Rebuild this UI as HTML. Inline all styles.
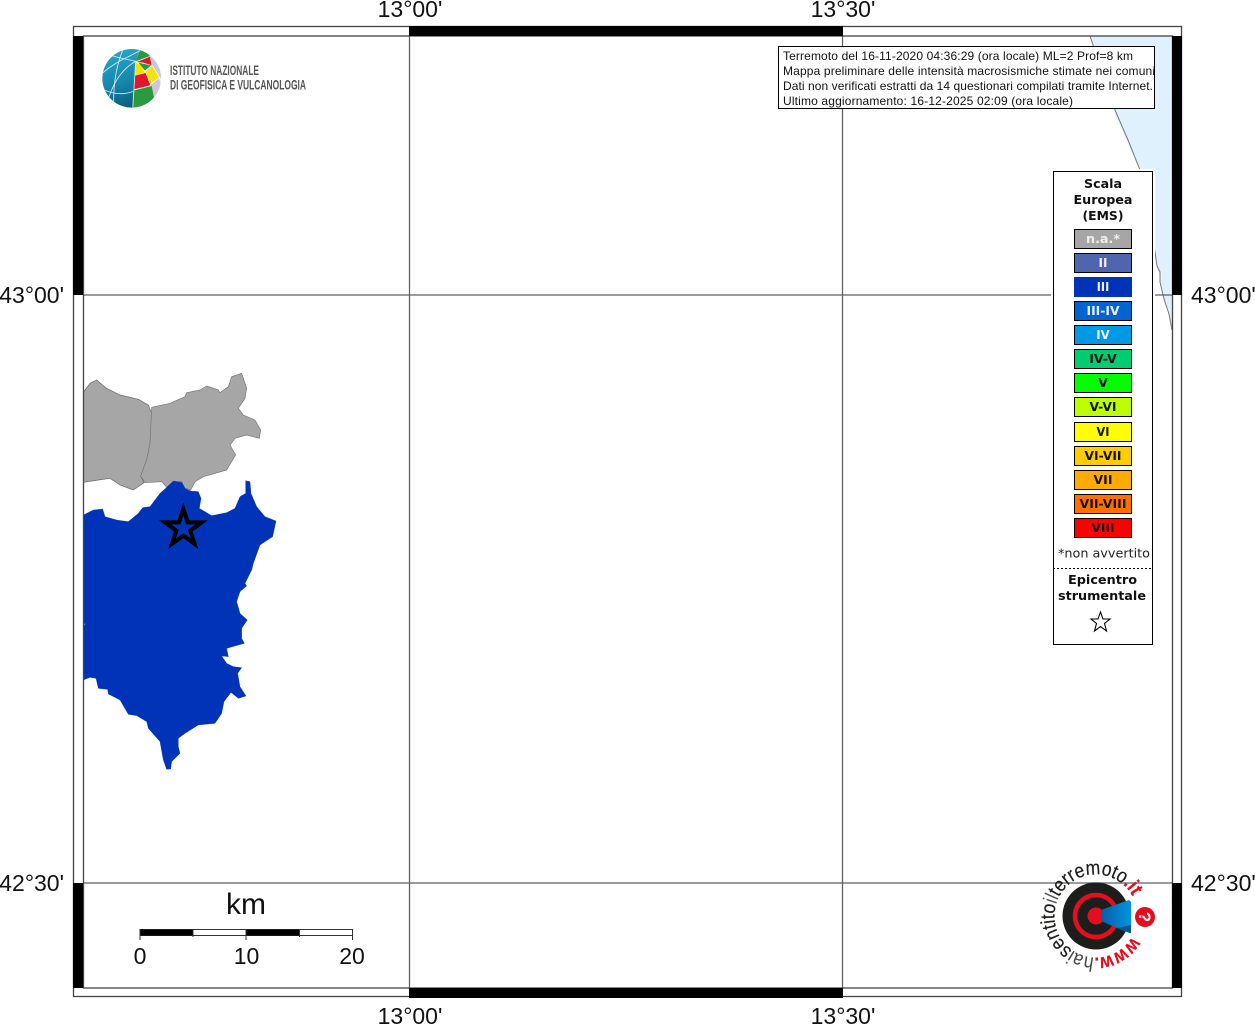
<!DOCTYPE html>
<html lang="it">
<head>
<meta charset="utf-8">
<title>Mappa intensità macrosismiche</title>
<style>
html,body{margin:0;padding:0;background:#fff;overflow:hidden}
svg{display:block}
.t{font-family:"Liberation Sans",sans-serif;fill:#111}
.d{font-family:"DejaVu Sans",sans-serif}
.b{font-family:"DejaVu Sans",sans-serif;font-weight:bold;font-size:12px;text-anchor:middle}
</style>
</head>
<body>
<svg width="1255" height="1024" viewBox="0 0 1255 1024" xmlns="http://www.w3.org/2000/svg">
<defs>
<linearGradient id="gl" x1="0.3" y1="0" x2="0.6" y2="1"><stop offset="0" stop-color="#27a5c8"/><stop offset=".55" stop-color="#1585ab"/><stop offset="1" stop-color="#0a5876"/></linearGradient>
<linearGradient id="horn" x1="0" y1="0" x2="1" y2="0"><stop offset="0" stop-color="#0a5cad"/><stop offset="1" stop-color="#0096dc"/></linearGradient>
<clipPath id="gc"><circle cx="110" cy="109" r="88"/></clipPath>
<path id="arc" d="M1131.9,936.75 A41.5,41.5 0 1 1 1133.6,898.5"/>
</defs>

<!-- water -->
<polygon points="1090,36 1172,36 1172,330 1170,318 1165,302 1162,290 1160,278 1157,266 1155,252 1140,170 1115,115" fill="#dff1fd"/>
<polyline points="1090,36 1115,110 1128,140 1140,170 1155,252 1157,266 1160,272 1160,282 1163,295 1165,302 1169,314 1172,330" fill="none" stroke="#777" stroke-width="1"/>

<!-- grid -->
<g stroke="#5f5f5f" stroke-width="1.25" fill="none">
<line x1="409.5" y1="36" x2="409.5" y2="988"/>
<line x1="842.5" y1="36" x2="842.5" y2="988"/>
<line x1="83" y1="295" x2="1172" y2="295"/>
<line x1="83" y1="883" x2="1172" y2="883"/>
</g>

<!-- regions -->
<g transform="translate(70,360) scale(.33333)" stroke-linejoin="round">
<polygon fill="#a6a6a6" stroke="#666" stroke-width="2" points="40,97 60,70 80,60 110,85 150,105 205,118 235,135 245,160 240,250 230,300 212,348 222,368 190,390 150,375 120,355 85,360 40,367"/>
<polygon fill="#a6a6a6" stroke="#777" stroke-width="2" points="245,142 300,130 345,110 350,98 390,90 410,78 445,90 450,98 475,80 485,50 515,40 530,85 525,115 505,145 520,165 555,180 572,210 568,235 530,225 495,235 480,255 497,285 470,330 400,350 375,365 362,390 345,385 335,365 310,365 290,382 275,365 225,368 212,348 230,300 240,250"/>
<polygon fill="#0033b8" stroke="#0033b8" stroke-width="1" points="40,465 70,450 98,447 105,470 140,480 175,485 205,460 218,443 240,440 270,400 290,382 310,363 335,367 345,385 362,393 385,395 393,415 388,445 425,467 470,458 495,445 510,410 527,400 527,362 540,365 543,400 560,440 585,470 618,483 608,530 570,555 550,610 545,630 525,670 530,678 510,695 500,725 510,760 532,780 515,805 515,835 523,850 470,865 475,890 455,888 470,910 490,920 515,923 503,940 510,980 528,1008 505,1015 483,997 462,1025 455,1060 435,1090 385,1095 345,1120 325,1135 325,1160 330,1180 305,1205 302,1227 290,1228 280,1200 270,1145 235,1105 230,1085 200,1067 175,1063 150,1020 115,1002 113,988 85,985 78,955 60,952 40,960 40,795 48,792 40,790"/>
<polygon fill="#0033b8" stroke="#000" stroke-width="12" stroke-linejoin="miter" stroke-miterlimit="6" points="340,447 353,487 395,487 361,512 374,552 340,527 306,552 319,512 285,487 327,487"/>
</g>

<!-- frame -->
<rect x="73.5" y="26.5" width="1108" height="970" fill="none" stroke="#444" stroke-width="1.3"/>
<rect x="83.5" y="36" width="1089" height="952" fill="none" stroke="#444" stroke-width="1.3"/>
<g fill="#000">
<rect x="409" y="26" width="434" height="10"/>
<rect x="409" y="988" width="434" height="10"/>
<rect x="73" y="36" width="10" height="259"/>
<rect x="73" y="883" width="10" height="105"/>
<rect x="1172" y="36" width="10" height="259"/>
<rect x="1172" y="883" width="10" height="105"/>
</g>

<!-- tick labels -->
<g class="t" font-size="23">
<text x="410" y="17" text-anchor="middle">13°00'</text>
<text x="843" y="17" text-anchor="middle">13°30'</text>
<text x="410" y="1024" text-anchor="middle">13°00'</text>
<text x="843" y="1024" text-anchor="middle">13°30'</text>
<text x="64" y="303" text-anchor="end">43°00'</text>
<text x="64" y="891" text-anchor="end">42°30'</text>
<text x="1191" y="303">43°00'</text>
<text x="1191" y="891">42°30'</text>
</g>

<!-- INGV logo -->
<g transform="translate(95,42) scale(.33333)">
<circle cx="110" cy="109" r="88" fill="url(#gl)"/>
<g clip-path="url(#gc)">
<polygon points="200,20 200,200 112,205 122,58 135,20" fill="#fff"/>
<polygon points="122,58 135,22 150,26 165,42" fill="#2a9a3c"/>
<polygon points="125,60 165,44 170,70 145,62" fill="#e2152f"/>
<polygon points="165,40 200,75 200,115 172,68" fill="#cfc6d8"/>
<polygon points="122,60 140,72 150,92 121,100" fill="#f4e20c"/>
<polygon points="130,62 168,70 150,86" fill="#2a9a3c"/>
<polygon points="152,88 172,72 192,106 166,126" fill="#f4e20c"/>
<polygon points="120,101 152,93 166,130 116,142" fill="#e2152f"/>
<polygon points="168,128 193,108 200,150 178,165" fill="#cfc6d8"/>
<polygon points="114,146 170,132 178,170 140,200 112,205" fill="#2a9a3c"/>
<polygon points="176,168 193,150 178,182" fill="#e2152f"/>
<g fill="none" stroke="#d8eef5" stroke-width="2.5">
<path d="M85,20 C68,60 54,120 56,195"/>
<path d="M122,58 L113,205"/>
<path d="M122,58 C90,75 60,110 42,165"/>
<path d="M42,38 C75,50 100,52 122,58"/>
<path d="M24,92 C60,60 95,48 135,26"/>
<path d="M30,145 C55,155 85,160 114,148"/>
</g>
</g>
</g>
<g font-family="'Liberation Sans',sans-serif" font-weight="bold" fill="#555" font-size="14">
<text x="170" y="75" textLength="89" lengthAdjust="spacingAndGlyphs">ISTITUTO NAZIONALE</text>
<text x="170" y="89.5" textLength="136" lengthAdjust="spacingAndGlyphs">DI GEOFISICA E VULCANOLOGIA</text>
</g>

<!-- info box -->
<rect x="778.5" y="46.5" width="376" height="62" fill="#fff"/>
<g class="t" font-size="12">
<text x="783" y="60" textLength="350" lengthAdjust="spacing">Terremoto del 16-11-2020 04:36:29 (ora locale) ML=2 Prof=8 km</text>
<text x="783" y="75" textLength="372" lengthAdjust="spacing">Mappa preliminare delle intensità macrosismiche stimate nei comuni</text>
<text x="783" y="90" textLength="370" lengthAdjust="spacing">Dati non verificati estratti da 14 questionari compilati tramite Internet.</text>
<text x="783" y="105" textLength="290" lengthAdjust="spacing">Ultimo aggiornamento: 16-12-2025 02:09 (ora locale)</text>
</g>
<rect x="778.5" y="46.5" width="376" height="62" fill="none" stroke="#000" stroke-width="1"/>

<!-- legend -->
<rect x="1051" y="169" width="104" height="478" fill="#fff"/>
<rect x="1053.5" y="171.5" width="99" height="473" fill="#fff" stroke="#000" stroke-width="1"/>
<g class="b" fill="#111">
<text x="1103" y="188" textLength="38" lengthAdjust="spacingAndGlyphs">Scala</text>
<text x="1103" y="204" textLength="59" lengthAdjust="spacingAndGlyphs">Europea</text>
<text x="1103" y="220" textLength="41" lengthAdjust="spacingAndGlyphs">(EMS)</text>
</g>
<g stroke="#000" stroke-width="1">
<rect x="1074.5" y="229.5" width="57" height="19" fill="#a6a6a6"/>
<rect x="1074.5" y="253.5" width="57" height="19" fill="#5065b0"/>
<rect x="1074.5" y="277.5" width="57" height="19" fill="#0033b8" stroke="#0033b8"/>
<rect x="1074.5" y="301.5" width="57" height="19" fill="#0064d2"/>
<rect x="1074.5" y="325.5" width="57" height="19" fill="#0099e6"/>
<rect x="1074.5" y="349.5" width="57" height="19" fill="#00cc70"/>
<rect x="1074.5" y="373.5" width="57" height="19" fill="#00ff00"/>
<rect x="1074.5" y="397.5" width="57" height="19" fill="#bbff00"/>
<rect x="1074.5" y="422.5" width="57" height="19" fill="#ffff00"/>
<rect x="1074.5" y="446.5" width="57" height="19" fill="#ffcc00"/>
<rect x="1074.5" y="470.5" width="57" height="19" fill="#ffaa00"/>
<rect x="1074.5" y="494.5" width="57" height="19" fill="#ff7000"/>
<rect x="1074.5" y="518.5" width="57" height="19" fill="#ff0000"/>
</g>
<g class="b" fill="#eee">
<text x="1103" y="243" textLength="34" lengthAdjust="spacingAndGlyphs">n.a.*</text>
<text x="1103" y="267" textLength="9" lengthAdjust="spacingAndGlyphs">II</text>
<text x="1103" y="291" textLength="12.5" lengthAdjust="spacingAndGlyphs">III</text>
<text x="1103" y="315" textLength="33" lengthAdjust="spacingAndGlyphs">III-IV</text>
<text x="1103" y="339" textLength="13.5" lengthAdjust="spacingAndGlyphs">IV</text>
</g>
<g class="b" fill="#111">
<text x="1103" y="363" textLength="27.5" lengthAdjust="spacingAndGlyphs">IV-V</text>
<text x="1103" y="387" textLength="9.5" lengthAdjust="spacingAndGlyphs">V</text>
<text x="1103" y="411" textLength="27" lengthAdjust="spacingAndGlyphs">V-VI</text>
<text x="1103" y="436" textLength="13" lengthAdjust="spacingAndGlyphs">VI</text>
<text x="1103" y="460" textLength="37" lengthAdjust="spacingAndGlyphs">VI-VII</text>
<text x="1103" y="484" textLength="19" lengthAdjust="spacingAndGlyphs">VII</text>
<text x="1103" y="508" textLength="47" lengthAdjust="spacingAndGlyphs">VII-VIII</text>
<text x="1103" y="532" textLength="23" lengthAdjust="spacingAndGlyphs">VIII</text>
</g>
<text class="d" x="1058" y="557.5" font-size="12" fill="#222" textLength="92" lengthAdjust="spacingAndGlyphs">*non avvertito</text>
<line x1="1053" y1="568.5" x2="1151" y2="568.5" stroke="#000" stroke-width="1" stroke-dasharray="2 2"/>
<g class="b" fill="#111">
<text x="1102.5" y="584" textLength="69" lengthAdjust="spacingAndGlyphs">Epicentro</text>
<text x="1102" y="600" textLength="88" lengthAdjust="spacingAndGlyphs">strumentale</text>
</g>
<polygon points="1100.5,612 1103,619 1110,619 1104.5,623.5 1106.5,631 1100.5,626.5 1094.5,631 1096.5,623.5 1091,619 1098,619" fill="#fff" stroke="#000" stroke-width="1.1"/>

<!-- scale bar -->
<g>
<rect x="140" y="929.5" width="212.5" height="6" fill="#fff" stroke="#333" stroke-width="1"/>
<rect x="140" y="929.5" width="53" height="6" fill="#000"/>
<rect x="246" y="929.5" width="53.5" height="6" fill="#000"/>
<g stroke="#333" stroke-width="1">
<line x1="140" y1="929" x2="140" y2="940"/>
<line x1="246" y1="929" x2="246" y2="940"/>
<line x1="352.5" y1="929" x2="352.5" y2="940"/>
<line x1="193" y1="929" x2="193" y2="937"/>
<line x1="299.5" y1="929" x2="299.5" y2="937"/>
</g>
</g>
<g class="t" text-anchor="middle" font-size="23">
<text x="140" y="964">0</text>
<text x="246.5" y="964">10</text>
<text x="352" y="964">20</text>
</g>
<text class="t" x="246" y="914" font-size="30" text-anchor="middle">km</text>

<!-- haisentito logo -->
<circle cx="1096" cy="916" r="33.5" fill="#1d1d1b"/>
<circle cx="1096" cy="916" r="21" fill="none" stroke="#e30f20" stroke-width="4.5"/>
<circle cx="1096" cy="916" r="8.5" fill="#e30f20"/>
<polygon points="1101,910 1129,900 1131,902 1131,933 1129,933 1101,921" fill="url(#horn)"/>
<polygon points="1117,928 1131,933 1131,925" fill="#0a5590"/>
<circle cx="1145" cy="917" r="10" fill="#e30f20"/>
<text x="1145" y="917" transform="rotate(90 1145 917)" font-family="'Liberation Sans',sans-serif" font-weight="bold" font-size="17" fill="#fff" text-anchor="middle" dy="6">?</text>
<text font-family="'Liberation Sans',sans-serif" font-size="20" fill="#1d1d1b" stroke="#1d1d1b" stroke-width=".2">
<textPath href="#arc" textLength="218" lengthAdjust="spacingAndGlyphs"><tspan fill="#e30f20" stroke="#e30f20" font-weight="bold">www.</tspan><tspan fill="#444" stroke="none">hai</tspan>sentito<tspan fill="#555" stroke="none">il</tspan>terremoto<tspan fill="#e30f20" stroke="#e30f20" font-weight="bold">.it</tspan></textPath>
</text>
</svg>
</body>
</html>
